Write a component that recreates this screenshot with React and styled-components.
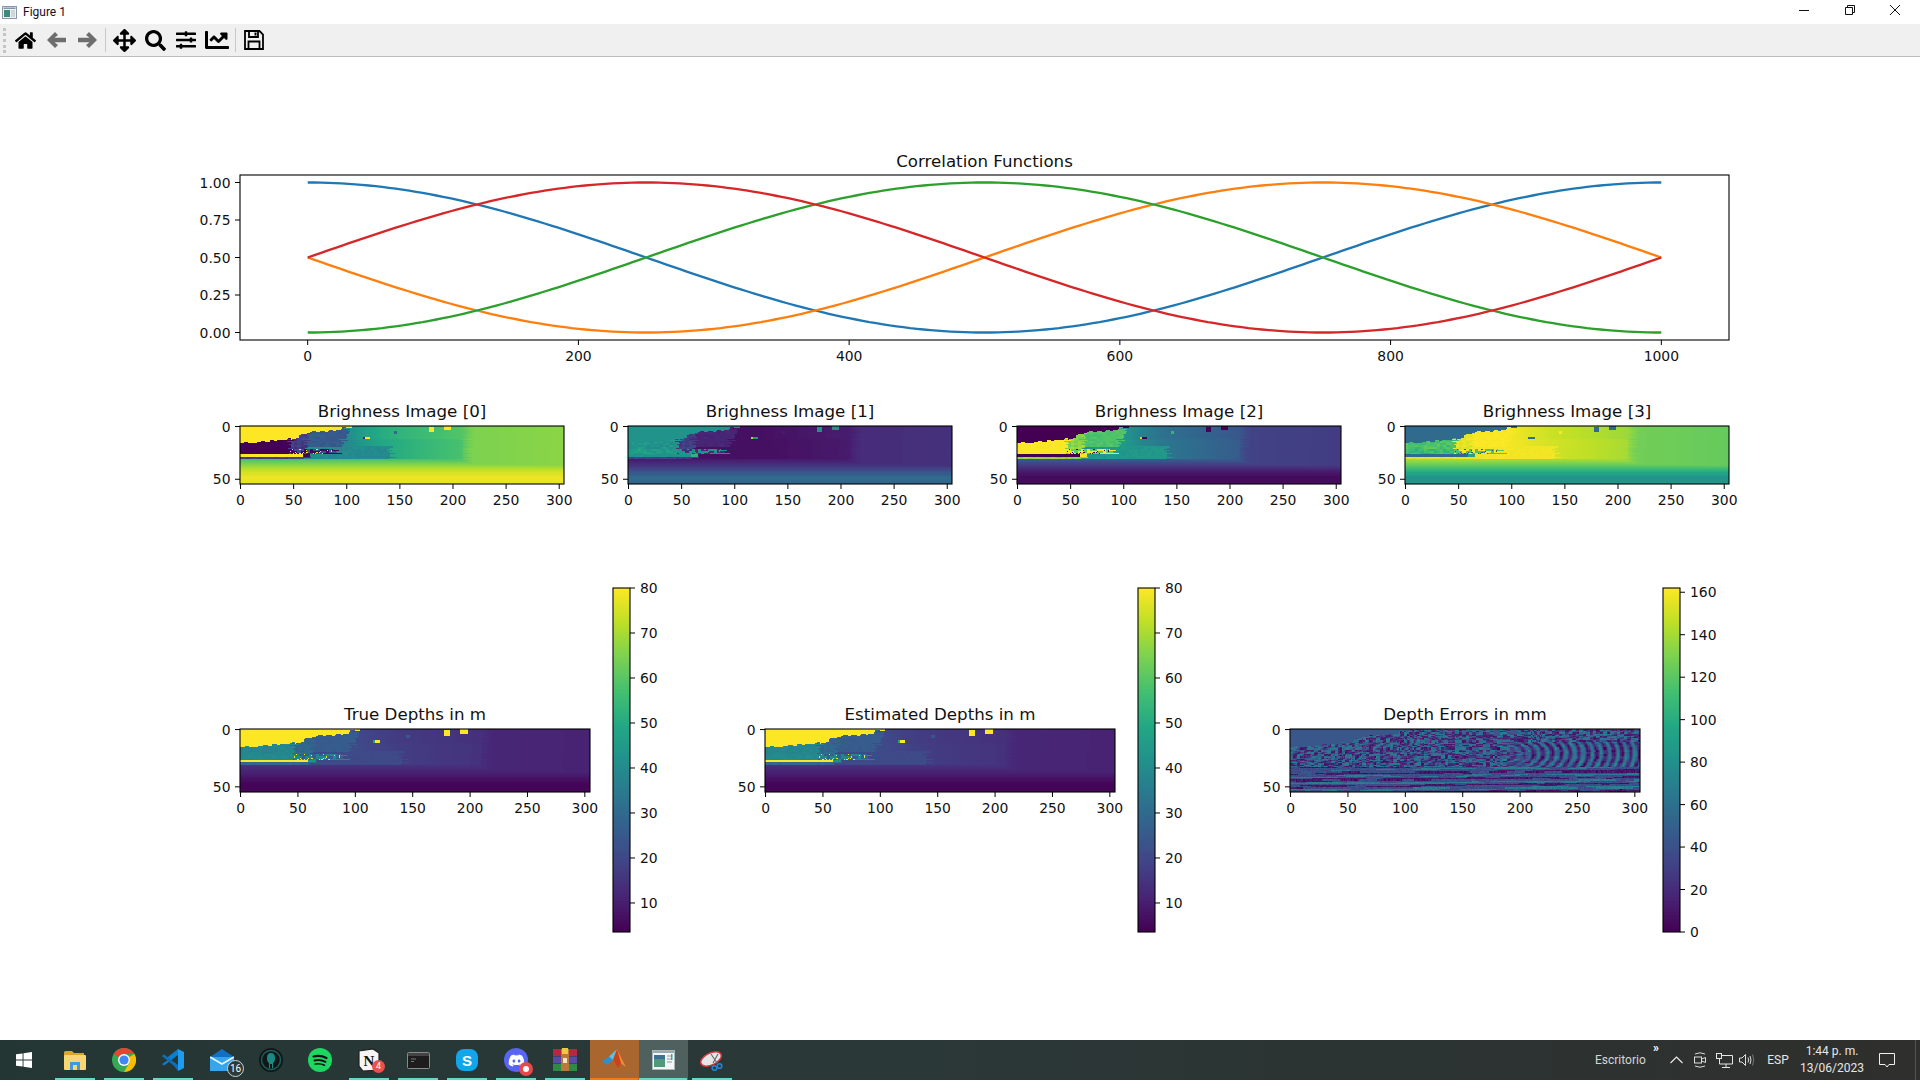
import React from 'react';
import styled, { createGlobalStyle } from 'styled-components';
import {
  FaHome,
  FaArrowsAlt,
  FaSearch,
  FaSlidersH,
  FaChartLine,
  FaDiscord,
} from 'react-icons/fa';

const VIRIDIS = ['#440154', '#482475', '#414487', '#355f8d', '#2a788e', '#21918c', '#22a884', '#44bf70', '#7ad151', '#bddf26', '#fde725'];

const hexToRgb = (hex) => [1, 3, 5].map((i) => parseInt(hex.slice(i, i + 2), 16));

const COLORMAP = Array.from({ length: 256 }, (_, i) => {
  const t = (i / 255) * 10;
  const lo = Math.min(Math.floor(t), 9);
  const a = hexToRgb(VIRIDIS[lo]);
  const b = hexToRgb(VIRIDIS[lo + 1]);
  const mix = a.map((v, k) => Math.round(v + (b[k] - v) * (t - lo)));
  return `rgb(${mix.join(',')})`;
});

const hash = (a, b) => {
  const s = Math.sin(a * 127.1 + b * 311.7) * 43758.5453;
  return s - Math.floor(s);
};

const interp = (pts, x) => {
  if (x <= pts[0][0]) return pts[0][1];
  for (let i = 1; i < pts.length; i++) {
    if (x <= pts[i][0]) {
      const [x0, y0] = pts[i - 1];
      const [x1, y1] = pts[i];
      return y0 + ((y1 - y0) * (x - x0)) / (x1 - x0);
    }
  }
  return pts[pts.length - 1][1];
};

const SKY_EDGE = [[0, 16], [20, 15], [35, 13], [45, 12], [60, 8], [66, 6], [75, 5], [90, 3], [100, 1], [105, 0], [306, 0]];
const FAR_DEPTH = [[95, 21], [115, 18.5], [135, 16.8], [170, 15.4], [208, 13.9], [218, 11.7], [305, 11]];

const skyEdge = (x) => interp(SKY_EDGE, x) + (x < 105 ? Math.floor(hash(Math.floor(x / 4), 3) * 2.4) - 1 : 0);

const COLS = 305;
const ROWS = 55;

const depthAt = (x, y) => {
  if (x >= 178 && x < 183 && y >= 1 && y < 6) return 80;
  if (x >= 192 && x < 199 && y < 4) return 80;
  if (x >= 116 && x < 122 && y >= 10 && y < 12) return x < 118 ? 48 : 80;
  if (x >= 145 && x < 148 && y >= 5 && y < 8) return 24;
  if (y < skyEdge(x)) return 80;
  if (y >= 27 && y < 29 && x < 59) return 80;
  if (y >= 27 && y < 29 && x < 66) return 42;
  const n = hash(Math.floor(x / 3), Math.floor(y / 2));
  const rowShift = (hash(y, 17) - 0.5) * 10;
  if (y >= 31) {
    const base = y < 48 ? 15 - ((y - 30) * 11) / 18 : 4 + (y - 48) * 0.15;
    return Math.min(base, interp(FAR_DEPTH, x));
  }
  if (y >= 22 && y < 27 && x + rowShift < 92) {
    if (x >= 46 && hash(x, y) > 0.93) return 78;
    return x < 46 ? 38 + n * 3 : n > 0.45 ? 38 : 27;
  }
  if (x + rowShift < 46 && y < 27) return 37 + n * 3;
  if (x + rowShift < 62) return 27 + n * 4;
  const edge = 100 - Math.max(0, y - 5) * 0.4;
  if (y < 20 && x + rowShift < edge) return 25 + n * 1.5;
  if (y >= 19 && x + rowShift < 142) return 20 + n * 1.2;
  return interp(FAR_DEPTH, x + rowShift * 0.5) + (y >= 12 && x < 210 ? 0.6 : 0);
};

const DEPTH = Array.from({ length: ROWS }, (_, y) => Array.from({ length: COLS }, (_, x) => depthAt(x, y)));

const DEPTH_MIN = 3.55;
const DEPTH_MAX = 80;
const TWO_PI = Math.PI * 2;

const brightness = [
  (d) => (1 + Math.cos((TWO_PI * d) / 80)) / 2,
  (d) => (1 - Math.sin((TWO_PI * (d + 0.8)) / 80)) / 2 + 0.04,
  (d) => (1 - Math.cos((TWO_PI * d) / 80)) / 2,
  (d) => (1 + Math.sin((TWO_PI * (d - 4)) / 80)) / 2,
];

const errorAt = (x, y) => {
  const d = DEPTH[y][x];
  const fine = hash(x, y);
  const block = hash(Math.floor(x / 3), Math.floor(y / 2) + 40);
  if (d === 80 && y < 17) return 44;
  if (y >= 33) {
    const seg = hash(Math.floor((x + y * 7) / 16), y);
    const s = Math.sin(y * 1.1 + x * 0.01) + (seg - 0.5) * 1.1;
    const base = s > 0.75 ? 66 : s < -0.7 ? 10 : 38;
    return base + (fine - 0.5) * 18;
  }
  if (x > 178 && y >= 11) {
    const r = Math.hypot(x - 172, (y - 21) * 2.6);
    const fade = Math.min(1, (x - 178) / 40);
    const ring = Math.sin(r * (0.72 + r * 0.0006));
    const noise = Math.sin(d * 9 + x * 0.5 + y * 1.1 + block * 5);
    return 38 + 28 * (ring * fade + noise * (1 - fade)) + (block - 0.5) * 22;
  }
  const v = Math.sin(d * 9 + x * 0.31 + y * 0.8 + block * 5);
  return 38 + 28 * v + (fine - 0.5) * 12;
};

// one path per colour keeps the dom small compared to a rect per cell
const buildPaths = (cols, rows, indexAt) => {
  const byColor = new Map();
  for (let y = 0; y < rows; y++) {
    let start = 0;
    let current = indexAt(0, y);
    for (let x = 1; x <= cols; x++) {
      const next = x < cols ? indexAt(x, y) : -1;
      if (next !== current) {
        byColor.set(current, (byColor.get(current) || '') + `M${start} ${y}h${x - start}v1h${start - x}z`);
        start = x;
        current = next;
      }
    }
  }
  return [...byColor.entries()];
};

const toIndex = (v) => Math.max(0, Math.min(255, Math.round(v * 255)));

const Heatmap = ({ width, height, cols, rows, indexAt }) => (
  <svg width={width} height={height} viewBox={`0 0 ${cols} ${rows}`} preserveAspectRatio='none' shapeRendering='crispEdges'>
    {buildPaths(cols, rows, indexAt).map(([idx, d]) => (
      <path key={idx} d={d} fill={COLORMAP[idx]} />
    ))}
  </svg>
);

const GlobalStyle = createGlobalStyle`
  html, body {
    margin: 0;
    padding: 0;
    background: #fff;
    overflow: hidden;
  }
`;

const Window = styled.div`
  width: 1920px;
  height: 1080px;
  display: flex;
  flex-direction: column;
  font-family: 'Roboto', 'Liberation Sans', sans-serif;
`;

const TitleBar = styled.div`
  height: 24px;
  flex: none;
  display: flex;
  align-items: center;
  padding: 0 2px;
  background: #fff;
`;

const TitleText = styled.span`
  margin-left: 6px;
  font-size: 12px;
  color: #1a0a2a;
  flex: 1;
`;

const WinButton = styled.div`
  width: 45.5px;
  height: 20px;
  display: flex;
  align-items: center;
  justify-content: center;
  margin-top: -4px;
`;

const Toolbar = styled.div`
  height: 32px;
  flex: none;
  display: flex;
  align-items: center;
  background: #f0f0f0;
  border-bottom: 1px solid #bdbdbd;
`;

const Grip = styled.div`
  width: 3px;
  height: 25px;
  margin: 0 3.5px 0 3px;
  border-left: 3px dotted #c4c4c4;
  box-sizing: border-box;
`;

const ToolButton = styled.div`
  width: 31px;
  height: 32px;
  display: flex;
  align-items: center;
  justify-content: center;
  color: #000;
`;

const ToolSep = styled.div`
  width: 1px;
  height: 24px;
  margin: 0 2.5px;
  background: #c8c8c8;
`;

const Canvas = styled.main`
  flex: 1;
  min-height: 0;
  background: #fff;
  padding: 118px 0 0 240px;
  overflow: hidden;
`;

const Row = styled.section`
  display: flex;
  margin-top: ${(p) => p.$top || 0}px;
  gap: ${(p) => p.$gap || 0}px;
`;

const DepthGroup = styled.div`
  width: 389px;
  flex: none;
  display: flex;
  align-items: center;
  gap: 22.5px;
`;

const Axes = styled.svg`
  display: block;
  flex: none;
  overflow: visible;

  text {
    font-family: 'DejaVu Sans', sans-serif;
    font-size: 13.9px;
    fill: #111;
  }

  text.title {
    font-size: 16.67px;
  }
`;

const Taskbar = styled.footer`
  height: 40px;
  flex: none;
  display: flex;
  align-items: stretch;
  background: linear-gradient(90deg, #243634 0%, #2a3938 40%, #2b3433 70%, #2f2f2d 100%);
`;

const TaskItem = styled.div`
  position: relative;
  width: 49px;
  flex: none;
  box-sizing: border-box;
  padding-right: 1px;
  display: flex;
  align-items: center;
  justify-content: center;
  background: ${(p) => (p.$attention ? '#a9662e' : p.$active ? '#4f605f' : 'transparent')};

  &:first-child {
    width: 51px;
    padding-right: 3px;
  }

  &::after {
    content: '';
    display: ${(p) => (p.$running ? 'block' : 'none')};
    position: absolute;
    bottom: 0;
    height: 2px;
    left: ${(p) => (p.$attention || p.$active ? 0 : 4)}px;
    right: ${(p) => (p.$attention || p.$active ? 1 : 5)}px;
    background: ${(p) => (p.$attention ? '#f47a16' : '#62d8c8')};
  }
`;

const CountBadge = styled.span`
  position: absolute;
  right: 3px;
  bottom: 3px;
  width: 15px;
  height: 15px;
  border-radius: 50%;
  border: 1px solid #cfd5d5;
  background: #2b3a3a;
  color: #fff;
  font-size: 10px;
  line-height: 15px;
  text-align: center;
`;

const RedBadge = styled.span`
  position: absolute;
  right: 9px;
  bottom: 7px;
  width: 13px;
  height: 13px;
  border-radius: 50%;
  background: #e5534b;
  color: #fff;
  font-size: 9px;
  line-height: 13px;
  text-align: center;
`;

const DiscordTile = styled.div`
  position: relative;
  width: 24px;
  height: 24px;
  border-radius: 50%;
  background: #5865f2;
  color: #fff;
  display: flex;
  align-items: center;
  justify-content: center;
`;

const RecordDot = styled.span`
  position: absolute;
  right: -5px;
  bottom: -4px;
  width: 6px;
  height: 6px;
  border: 4px solid #e8474c;
  border-radius: 50%;
  background: #fff;
`;

const Spacer = styled.div`
  flex: 1;
`;

const Tray = styled.div`
  display: flex;
  align-items: center;
  color: #e6e6e6;
  font-size: 12px;
`;

const DesktopLabel = styled.span`
  position: relative;
  width: 68px;
  color: #d6d6d6;
`;

const Chevrons = styled.span`
  position: absolute;
  left: 58px;
  top: -12px;
  font-size: 12px;
  font-weight: 700;
  color: #fff;
`;

const TrayIcon = styled.div`
  width: ${(p) => p.$w || 24}px;
  display: flex;
  justify-content: center;
`;

const Lang = styled.span`
  width: 42px;
  text-align: center;
`;

const Clock = styled.div`
  width: 72px;
  margin-left: -3px;
  text-align: center;
  line-height: 17px;
`;

const Notify = styled.div`
  width: 44px;
  margin: 0 5px 0 -3px;
  display: flex;
  justify-content: center;
`;

const DesktopEdge = styled.div`
  width: 1px;
  margin: 0 4px 0 1px;
  background: #555;
`;

const XTick = ({ x, y, label }) => (
  <g>
    <line x1={x} x2={x} y1={y} y2={y + 5} stroke='#000' />
    <text x={x} y={y + 20.5} textAnchor='middle'>{label}</text>
  </g>
);

const YTick = ({ y, label }) => (
  <g>
    <line x1={-5} x2={0} y1={y} y2={y} stroke='#000' />
    <text x={-9.5} y={y + 5} textAnchor='end'>{label}</text>
  </g>
);

const Frame = ({ width, height }) => (
  <rect x={0} y={0} width={width} height={height} fill='none' stroke='#000' strokeWidth={1.1} />
);

const CURVES = [
  ['#1f77b4', (t) => (1 + Math.cos(TWO_PI * t)) / 2],
  ['#ff7f0e', (t) => (1 - Math.sin(TWO_PI * t)) / 2],
  ['#2ca02c', (t) => (1 - Math.cos(TWO_PI * t)) / 2],
  ['#d62728', (t) => (1 + Math.sin(TWO_PI * t)) / 2],
];

const CorrelationPlot = () => {
  const W = 1489;
  const H = 165;
  const px = (v) => ((v + 50) / 1100) * W;
  const py = (v) => H - ((v + 0.05) / 1.1) * H;
  const samples = Array.from({ length: 201 }, (_, i) => i * 5);
  return (
    <Axes width={W} height={H}>
      <text className='title' x={W / 2} y={-8} textAnchor='middle'>Correlation Functions</text>
      {CURVES.map(([color, fn]) => (
        <polyline
          key={color}
          fill='none'
          stroke={color}
          strokeWidth={2.3}
          points={samples.map((v) => `${px(v).toFixed(1)},${py(fn(v / 1000)).toFixed(1)}`).join(' ')}
        />
      ))}
      {[0, 200, 400, 600, 800, 1000].map((v) => <XTick key={v} x={px(v)} y={H} label={v} />)}
      {[0, 0.25, 0.5, 0.75, 1].map((v) => <YTick key={v} y={py(v)} label={v.toFixed(2)} />)}
      <Frame width={W} height={H} />
    </Axes>
  );
};

const ImagePlot = ({ title, width, height, indexAt }) => {
  const sx = width / COLS;
  const sy = height / ROWS;
  return (
    <Axes width={width} height={height}>
      <text className='title' x={width / 2} y={-9.5} textAnchor='middle'>{title}</text>
      <Heatmap width={width} height={height} cols={COLS} rows={ROWS} indexAt={indexAt} />
      {[0, 50, 100, 150, 200, 250, 300].map((v) => <XTick key={v} x={(v + 0.5) * sx} y={height} label={v} />)}
      {[0, 50].map((v) => <YTick key={v} y={(v + 0.5) * sy} label={v} />)}
      <Frame width={width} height={height} />
    </Axes>
  );
};

const Colorbar = ({ min, max, ticks }) => {
  const W = 17;
  const H = 344;
  const rows = 256;
  return (
    <Axes width={W} height={H}>
      <Heatmap width={W} height={H} cols={1} rows={rows} indexAt={(x, y) => rows - 1 - y} />
      {ticks.map((v) => {
        const y = H - ((v - min) / (max - min)) * H;
        return (
          <g key={v}>
            <line x1={W} x2={W + 5} y1={y} y2={y} stroke='#000' />
            <text x={W + 10} y={y + 5}>{v}</text>
          </g>
        );
      })}
      <Frame width={W} height={H} />
    </Axes>
  );
};

const depthIndex = (x, y) => toIndex((DEPTH[y][x] - DEPTH_MIN) / (DEPTH_MAX - DEPTH_MIN));
const errorIndex = (x, y) => toIndex(errorAt(x, y) / 162);
const depthTicks = [10, 20, 30, 40, 50, 60, 70, 80];
const errorTicks = [0, 20, 40, 60, 80, 100, 120, 140, 160];

const FigureIcon = () => (
  <svg width='15' height='13' viewBox='0 0 15 13'>
    <rect x='0.5' y='0.5' width='14' height='12' fill='#eef2f5' stroke='#8a98a8' />
    <rect x='1.5' y='1.5' width='12' height='1.5' fill='#7f96b0' />
    <rect x='2' y='4' width='6' height='7' fill='#3d8a78' />
    <rect x='9' y='4' width='4' height='7' fill='#cfd8d8' />
  </svg>
);

const MinIcon = () => (
  <svg width='10' height='10' viewBox='0 0 10 10'><path d='M0 5.5H10' stroke='#111' /></svg>
);

const RestoreIcon = () => (
  <svg width='10' height='10' viewBox='0 0 10 10' fill='none' stroke='#111'>
    <path d='M0.5 2.5H7.5V9.5H0.5Z M2.5 2.5V0.5H9.5V7.5H7.5' />
  </svg>
);

const CloseIcon = () => (
  <svg width='10' height='10' viewBox='0 0 10 10'><path d='M0 0L10 10M10 0L0 10' stroke='#111' /></svg>
);

const BackIcon = () => (
  <svg width='19' height='16' viewBox='0 0 19 16' fill='#6e6e6e'>
    <path d='M8 0L11 3L7.5 5.8H19V10.2H7.5L11 13L8 16L0 8Z' />
  </svg>
);

const ForwardIcon = () => (
  <svg width='19' height='16' viewBox='0 0 19 16' fill='#6e6e6e'>
    <path d='M11 0L8 3L11.5 5.8H0V10.2H11.5L8 13L11 16L19 8Z' />
  </svg>
);

const SaveIcon = () => (
  <svg width='20' height='20' viewBox='0 0 20 20' fill='none' stroke='#000' strokeWidth='1.8'>
    <path d='M1 1H15.5L19 4.5V19H1Z' />
    <path d='M5 1.2V7H14V1.2' />
    <rect x='10.5' y='2.5' width='2' height='3' fill='#000' stroke='none' />
    <path d='M4.5 19V11.5H15.5V19' />
  </svg>
);

const WindowsLogo = () => (
  <svg width='16' height='16' viewBox='0 0 16 16' fill='#fff'>
    <path d='M0 2.3L6.6 1.4V7.5H0Z M7.5 1.3L16 0V7.5H7.5Z M0 8.5H6.6V14.6L0 13.7Z M7.5 8.5H16V16L7.5 14.7Z' />
  </svg>
);

const ExplorerIcon = () => (
  <svg width='22' height='19' viewBox='0 0 22 19'>
    <path d='M0 1.5Q0 0 1.5 0H8L10 2H20V5H0Z' fill='#e0a526' />
    <rect x='0' y='4' width='22' height='15' rx='1' fill='#f8d675' />
    <path d='M6 11H16V19H13V14H9V19H6Z' fill='#3f9be0' />
  </svg>
);

const ChromeIcon = () => (
  <svg width='24' height='24' viewBox='0 0 24 24'>
    <circle cx='12' cy='12' r='12' fill='#34a853' />
    <path d='M12 0A12 12 0 0 1 22.4 6H12A6 6 0 0 0 6.8 9L1.6 6A12 12 0 0 1 12 0Z' fill='#ea4335' />
    <path d='M22.4 6A12 12 0 0 1 12 24L17.2 15A6 6 0 0 0 17.2 9Z' fill='#fbbc05' />
    <circle cx='12' cy='12' r='6' fill='#fff' />
    <circle cx='12' cy='12' r='4.6' fill='#4285f4' />
  </svg>
);

const VsCodeIcon = () => (
  <svg width='24' height='24' viewBox='0 0 24 24'>
    <path d='M17 1L23 4V20L17 23L17 17V7Z' fill='#1f9cf0' />
    <path d='M17 1V7L6.5 15L2.8 17.5L1 16L7 12L1 8L2.8 6.5L6.5 9.2Z' fill='#0b7fcb' />
    <path d='M17 23V17L6.5 9.2L2.8 6.5L1 8L13 18Z' fill='#0e6eb4' />
  </svg>
);

const MailIcon = () => (
  <svg width='24' height='22' viewBox='0 0 24 22'>
    <path d='M12 0L24 8V22H0V8Z' fill='#1270c4' />
    <rect x='0' y='8' width='24' height='14' fill='#35a6ee' />
    <path d='M0 8L12 15L24 8' fill='none' stroke='#e8f5fd' strokeWidth='1.6' />
  </svg>
);

const KrakenIcon = () => (
  <svg width='24' height='24' viewBox='0 0 24 24'>
    <circle cx='12' cy='12' r='12' fill='#111716' />
    <circle cx='12' cy='12' r='9.5' fill='none' stroke='#1b5f5c' strokeWidth='1.5' />
    <path d='M12 5Q16 5 16 10Q16 14 14 15V20H13V16H11V20H10V15Q8 14 8 10Q8 5 12 5Z' fill='#1c8a84' />
  </svg>
);

const SpotifyIcon = () => (
  <svg width='24' height='24' viewBox='0 0 24 24' fill='none' stroke='#111' strokeLinecap='round'>
    <circle cx='12' cy='12' r='12' fill='#1ed760' stroke='none' />
    <path d='M5.5 8.5Q12 6.5 18.5 10' strokeWidth='2.2' />
    <path d='M6.5 12.5Q12 11 17.5 13.8' strokeWidth='1.9' />
    <path d='M7.2 16Q12 15 16.5 17.2' strokeWidth='1.6' />
  </svg>
);

const NotionIcon = () => (
  <svg width='22' height='24' viewBox='0 0 22 24'>
    <path d='M1 3L15 1L21 5V22L5 23L1 18Z' fill='#f5f5f5' stroke='#222' strokeWidth='1.2' />
    <text x='11' y='18' textAnchor='middle' fontFamily='Liberation Serif, serif' fontWeight='700' fontSize='15' fill='#111'>N</text>
  </svg>
);

const TerminalIcon = () => (
  <svg width='23' height='17' viewBox='0 0 23 17'>
    <rect x='0.5' y='0.5' width='22' height='16' rx='1' fill='#1d1d1d' stroke='#8a8a8a' />
    <rect x='1' y='1' width='21' height='3' fill='#444' />
    <path d='M4 7H9M4 9.5H7' stroke='#777' strokeWidth='1' />
  </svg>
);

const SkypeIcon = () => (
  <svg width='22' height='22' viewBox='0 0 22 22'>
    <rect x='0' y='0' width='22' height='22' rx='8' fill='#12a5ec' />
    <text x='11' y='16.5' textAnchor='middle' fontFamily='Liberation Sans, sans-serif' fontWeight='700' fontSize='15' fill='#fff'>S</text>
  </svg>
);

const WinrarIcon = () => (
  <svg width='24' height='24' viewBox='0 0 24 24'>
    <rect x='0' y='1' width='24' height='7' fill='#b5283f' />
    <rect x='0' y='8.5' width='24' height='7' fill='#5a49a8' />
    <rect x='0' y='16' width='24' height='7' fill='#2f8a45' />
    <rect x='8' y='1' width='8' height='22' fill='#b9793a' />
    <rect x='9' y='0' width='6' height='6' fill='#f2c744' />
    <rect x='10' y='10' width='4' height='5' fill='#f3e6c8' />
  </svg>
);

const MatlabIcon = () => (
  <svg width='24' height='22' viewBox='0 0 24 22'>
    <path d='M0 12L7 7.5L11 11L5 16Z' fill='#2f8fce' />
    <path d='M7 7.5L15 0L11 11Z' fill='#5cc0e4' />
    <path d='M15 0Q19 9 24 18Q21 16.5 19 14L16 20Q13 14 11 11Z' fill='#f08a3c' />
    <path d='M15 0L19 14L16 20Q13 14 11 11Z' fill='#c9431a' />
  </svg>
);

const FigureAppIcon = () => (
  <svg width='23' height='20' viewBox='0 0 23 20'>
    <rect x='0.5' y='0.5' width='22' height='19' fill='#f3f6f6' stroke='#aab5b5' />
    <rect x='1' y='1' width='21' height='2' fill='#9aa9b4' />
    <rect x='2' y='5' width='11' height='12' fill='#4f9a78' />
    <rect x='2' y='5' width='11' height='4' fill='#3e6f9a' />
    <path d='M15 6H20M15 9H20M15 12H20' stroke='#8c9a9a' />
    <rect x='19' y='4' width='1.5' height='6' fill='#3aa7a0' />
  </svg>
);

const SnipIcon = () => (
  <svg width='24' height='22' viewBox='0 0 24 22' fill='none'>
    <ellipse cx='11' cy='10' rx='11' ry='6' fill='#e6e6e6' stroke='#d0343c' strokeWidth='1.5' transform='rotate(-25 11 10)' />
    <path d='M11 5L17 14M18 5L13 14' stroke='#666' strokeWidth='1.1' />
    <circle cx='19.5' cy='17' r='2.3' stroke='#1f86d6' strokeWidth='1.6' />
    <circle cx='14.5' cy='19' r='2.3' stroke='#1f86d6' strokeWidth='1.6' />
  </svg>
);

const CaretIcon = () => (
  <svg width='13' height='8' viewBox='0 0 13 8' fill='none' stroke='#eee' strokeWidth='1.1'><path d='M0.5 7L6.5 1L12.5 7' /></svg>
);

const MeetIcon = () => (
  <svg width='14' height='16' viewBox='0 0 14 16' fill='none' stroke='#ddd'>
    <path d='M2 2Q7 -0.5 12 2M2 14Q7 16.5 12 14' />
    <rect x='1.5' y='5' width='7' height='6' />
    <path d='M8.5 7L12.5 5.5V10.5L8.5 9' />
  </svg>
);

const NetworkIcon = () => (
  <svg width='17' height='15' viewBox='0 0 17 15' fill='none' stroke='#e6e6e6'>
    <path d='M3.5 2.5H16.5V11H3.5ZM10 11V14M6 14.5H14' />
    <rect x='0.5' y='0.5' width='5' height='5' fill='#2d3232' />
  </svg>
);

const SpeakerIcon = () => (
  <svg width='16' height='14' viewBox='0 0 16 14' fill='none' stroke='#ddd'>
    <path d='M0.5 5H3L6.5 1.5V12.5L3 9H0.5Z' />
    <path d='M9 4.5Q10.5 7 9 9.5M11 3Q13 7 11 11' />
    <path d='M13.5 1.5Q16 7 13.5 12.5' stroke='#777' />
  </svg>
);

const NotifyIcon = () => (
  <svg width='16' height='15' viewBox='0 0 16 15' fill='none' stroke='#f0f0f0'>
    <path d='M0.5 0.5H15.5V11.5H10L8 14L6 11.5H0.5Z' />
  </svg>
);

const APPS = [
  { id: 'start', icon: <WindowsLogo /> },
  { id: 'explorer', icon: <ExplorerIcon />, running: true },
  { id: 'chrome', icon: <ChromeIcon />, running: true },
  { id: 'vscode', icon: <VsCodeIcon />, running: true },
  { id: 'mail', icon: <MailIcon />, badge: <CountBadge>16</CountBadge> },
  { id: 'kraken', icon: <KrakenIcon /> },
  { id: 'spotify', icon: <SpotifyIcon /> },
  { id: 'notion', icon: <NotionIcon />, running: true, badge: <RedBadge>4</RedBadge> },
  { id: 'terminal', icon: <TerminalIcon />, running: true },
  { id: 'skype', icon: <SkypeIcon />, running: true },
  { id: 'discord', icon: <DiscordTile><FaDiscord size={17} /><RecordDot /></DiscordTile>, running: true },
  { id: 'winrar', icon: <WinrarIcon />, running: true },
  { id: 'matlab', icon: <MatlabIcon />, running: true, attention: true },
  { id: 'figure', icon: <FigureAppIcon />, running: true, active: true },
  { id: 'snip', icon: <SnipIcon />, running: true },
];

const App = () => (
  <Window>
    <GlobalStyle />
    <TitleBar>
      <FigureIcon />
      <TitleText>Figure 1</TitleText>
      <WinButton><MinIcon /></WinButton>
      <WinButton><RestoreIcon /></WinButton>
      <WinButton><CloseIcon /></WinButton>
    </TitleBar>
    <Toolbar>
      <Grip />
      <ToolButton><FaHome size={21} /></ToolButton>
      <ToolButton><BackIcon /></ToolButton>
      <ToolButton><ForwardIcon /></ToolButton>
      <ToolSep />
      <ToolButton><FaArrowsAlt size={23} /></ToolButton>
      <ToolButton><FaSearch size={21} /></ToolButton>
      <ToolButton><FaSlidersH size={20} /></ToolButton>
      <ToolButton><FaChartLine size={24} /></ToolButton>
      <ToolSep />
      <ToolButton><SaveIcon /></ToolButton>
    </Toolbar>
    <Canvas>
      <Row>
        <CorrelationPlot />
      </Row>
      <Row $top={86} $gap={64.3}>
        {brightness.map((fn, k) => (
          <ImagePlot
            key={k}
            title={`Brighness Image [${k}]`}
            width={324}
            height={58}
            indexAt={(x, y) => toIndex(fn(DEPTH[y][x]))}
          />
        ))}
      </Row>
      <Row $top={104} $gap={136}>
        <DepthGroup>
          <ImagePlot title='True Depths in m' width={350} height={63} indexAt={depthIndex} />
          <Colorbar min={DEPTH_MIN} max={DEPTH_MAX} ticks={depthTicks} />
        </DepthGroup>
        <DepthGroup>
          <ImagePlot title='Estimated Depths in m' width={350} height={63} indexAt={depthIndex} />
          <Colorbar min={DEPTH_MIN} max={DEPTH_MAX} ticks={depthTicks} />
        </DepthGroup>
        <DepthGroup>
          <ImagePlot title='Depth Errors in mm' width={350} height={63} indexAt={errorIndex} />
          <Colorbar min={0} max={162} ticks={errorTicks} />
        </DepthGroup>
      </Row>
    </Canvas>
    <Taskbar>
      {APPS.map((app) => (
        <TaskItem key={app.id} $running={app.running} $active={app.active} $attention={app.attention}>
          {app.icon}
          {app.badge}
        </TaskItem>
      ))}
      <Spacer />
      <Tray>
        <DesktopLabel>Escritorio<Chevrons>»</Chevrons></DesktopLabel>
        <TrayIcon $w={26}><CaretIcon /></TrayIcon>
        <TrayIcon $w={22}><MeetIcon /></TrayIcon>
        <TrayIcon $w={26}><NetworkIcon /></TrayIcon>
        <TrayIcon $w={20}><SpeakerIcon /></TrayIcon>
        <Lang>ESP</Lang>
        <Clock>1:44 p. m.<br />13/06/2023</Clock>
        <Notify><NotifyIcon /></Notify>
      </Tray>
      <DesktopEdge />
    </Taskbar>
  </Window>
);

export default App;
